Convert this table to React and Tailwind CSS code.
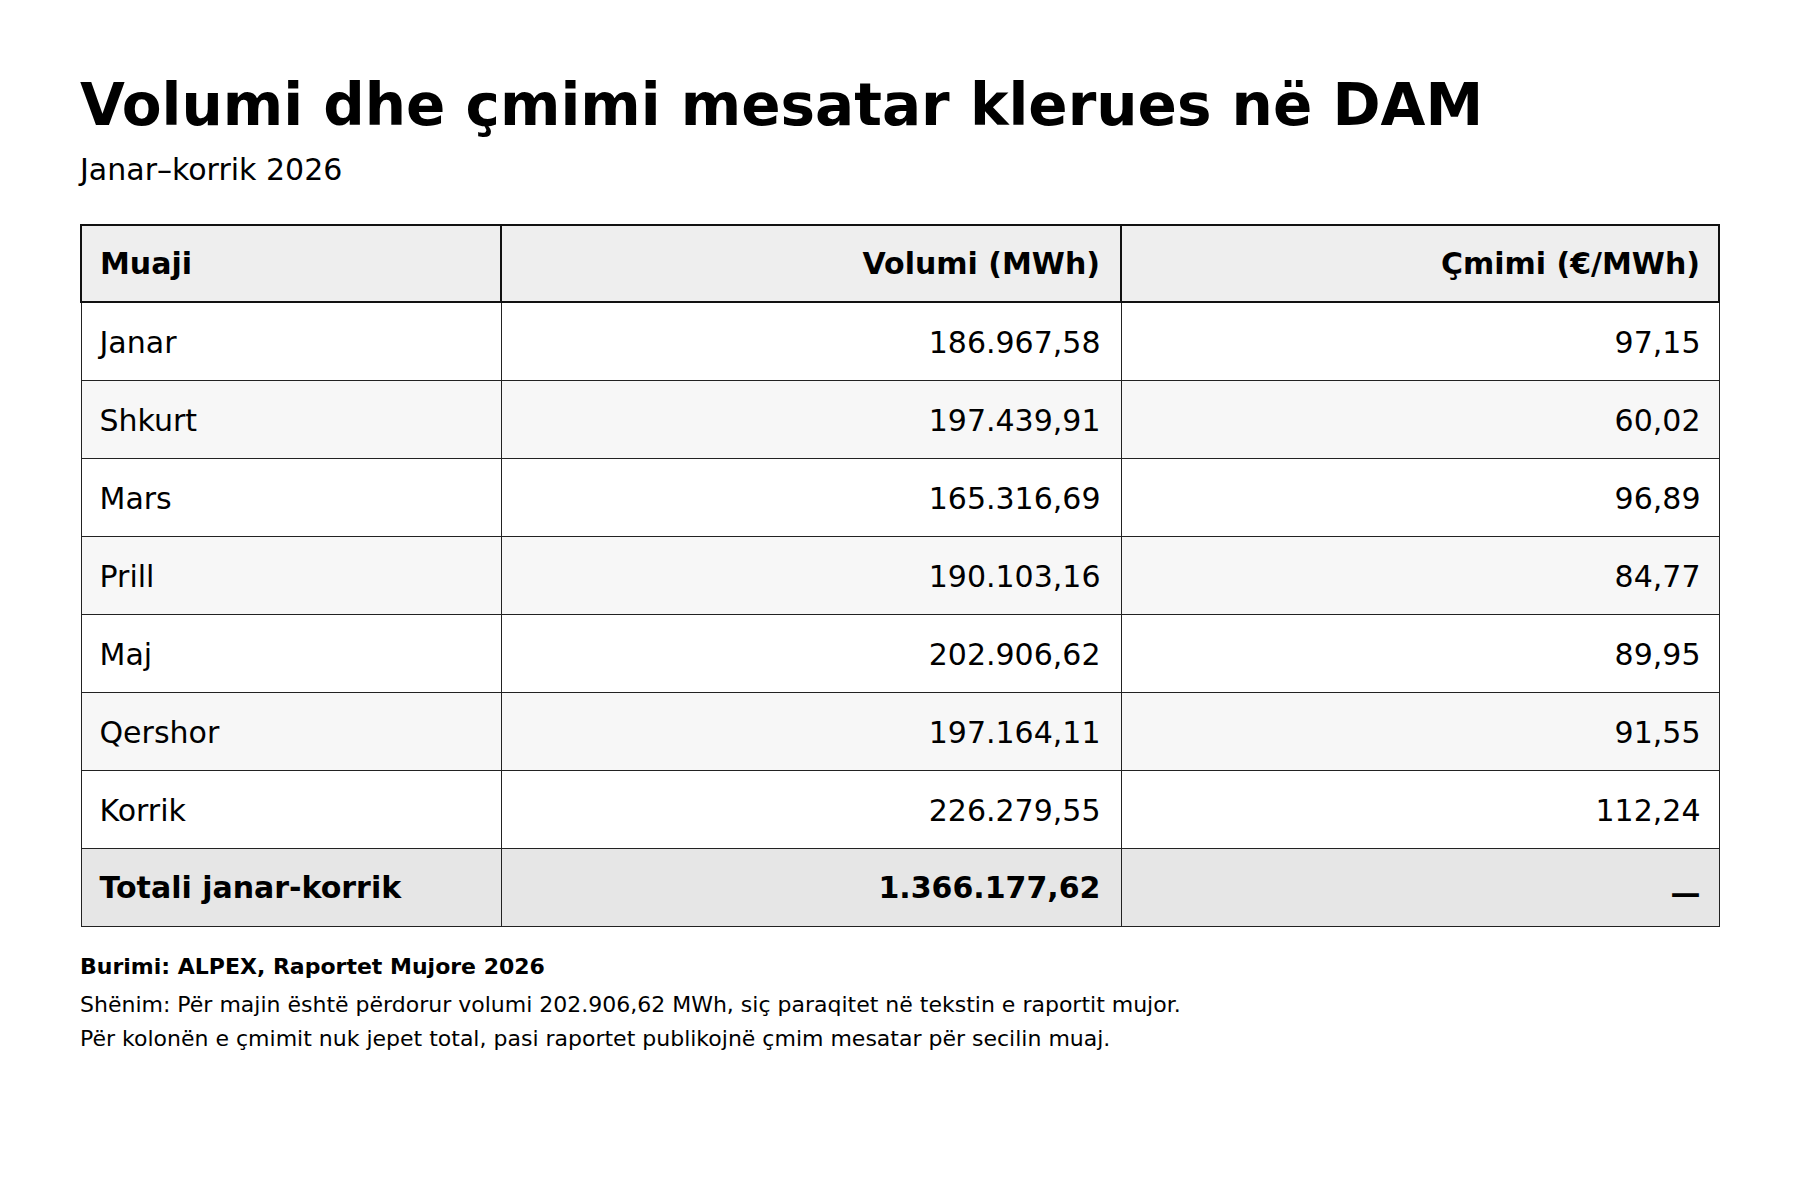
const rows = [
  { month: 'Janar', volume: '186.967,58', price: '97,15' },
  { month: 'Shkurt', volume: '197.439,91', price: '60,02' },
  { month: 'Mars', volume: '165.316,69', price: '96,89' },
  { month: 'Prill', volume: '190.103,16', price: '84,77' },
  { month: 'Maj', volume: '202.906,62', price: '89,95' },
  { month: 'Qershor', volume: '197.164,11', price: '91,55' },
  { month: 'Korrik', volume: '226.279,55', price: '112,24' },
]

export default function App() {
  return (
    <div
      className="min-h-screen bg-white text-black px-[80px] pt-[76px]"
      style={{ fontFamily: '"DejaVu Sans", Verdana, sans-serif' }}
    >
      <h1 className="text-[58px] font-bold leading-none">
        Volumi dhe çmimi mesatar klerues në DAM
      </h1>
      <p className="mt-[21px] text-[30px] leading-none">Janar–korrik 2026</p>

      <table className="mt-[39px] w-[1638px] table-fixed border-collapse text-[30px]">
        <colgroup>
          <col className="w-[420px]" />
          <col className="w-[620px]" />
          <col className="w-[598px]" />
        </colgroup>
        <thead>
          <tr className="h-[77px] bg-[#eeeeee]">
            <th className="border-2 border-[#111] pl-[18px] pr-5 text-left font-bold">Muaji</th>
            <th className="border-2 border-[#111] pl-[18px] pr-5 text-right font-bold">Volumi (MWh)</th>
            <th className="border-2 border-[#111] pl-[18px] pr-[18px] text-right font-bold">Çmimi (€/MWh)</th>
          </tr>
        </thead>
        <tbody>
          {rows.map((r, i) => (
            <tr key={r.month} className={`h-[78px] ${i % 2 === 1 ? 'bg-[#f7f7f7]' : 'bg-white'}`}>
              <td className="border border-[#222] pl-[18px] pr-5 pt-[2px] text-left">{r.month}</td>
              <td className="border border-[#222] pl-[18px] pr-5 pt-[2px] text-right">{r.volume}</td>
              <td className="border border-[#222] pl-[18px] pr-[18px] pt-[2px] text-right">{r.price}</td>
            </tr>
          ))}
          <tr className="h-[78px] bg-[#e6e6e6] font-bold">
            <td className="border border-[#222] pl-[18px] pr-5 text-left">Totali janar-korrik</td>
            <td className="border border-[#222] pl-[18px] pr-5 text-right">1.366.177,62</td>
            <td className="border border-[#222] pl-[18px] pr-[18px] text-right">
              <span className="relative top-[5px]">—</span>
            </td>
          </tr>
        </tbody>
      </table>

      <div className="mt-[29px]">
        <p className="text-[22px] font-bold leading-none">Burimi: ALPEX, Raportet Mujore 2026</p>
        <p className="mt-[10px] text-[22px] leading-[34px]">
          Shënim: Për majin është përdorur volumi 202.906,62 MWh, siç paraqitet në tekstin e raportit mujor.
          <br />
          Për kolonën e çmimit nuk jepet total, pasi raportet publikojnë çmim mesatar për secilin muaj.
        </p>
      </div>
    </div>
  )
}
